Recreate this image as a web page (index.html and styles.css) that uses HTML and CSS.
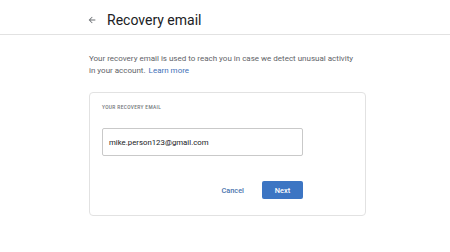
FILE: index.html
```html
<!DOCTYPE html>
<html lang="en">
<head>
<meta charset="utf-8">
<title>Recovery email</title>
<link rel="stylesheet" href="styles.css">
</head>
<body>
<header class="header">
  <svg class="back" viewBox="0 0 24 24" width="10" height="10" aria-hidden="true"><path d="M20 11H7.83l5.59-5.59L12 4l-8 8 8 8 1.41-1.41L7.83 13H20v-2z"/></svg>
  <h1 class="title">Recovery email</h1>
</header>
<main class="main">
  <p class="intro">Your recovery email is used to reach you in case we detect unusual activity in your account.<a class="link" href="#">Learn more</a></p>
  <section class="card">
    <div class="label">YOUR RECOVERY EMAIL</div>
    <div class="field">mike.person123@gmail.com</div>
    <div class="actions">
      <button class="btn-text" type="button">Cancel</button>
      <button class="btn-primary" type="button">Next</button>
    </div>
  </section>
</main>
</body>
</html>
```
FILE: styles.css
```css
html, body {
  margin: 0;
  padding: 0;
  background: #ffffff;
  font-family: Roboto, "Liberation Sans", Arial, sans-serif;
  color: #202124;
}
.header {
  height: 35px;
  border-bottom: 1px solid #e2e2e2;
  display: flex;
  align-items: center;
  padding-left: 87px;
  padding-top: 6px;
  box-sizing: border-box;
}
.back {
  fill: #6b6f73;
  margin-right: 10px;
}
.title {
  margin: 0;
  font-size: 14px;
  font-weight: 400;
  color: #202124;
  line-height: 18px;
}
.main {
  padding-left: 89px;
  width: 277px;
}
.intro {
  margin: 18px 0 0;
  font-size: 8px;
  line-height: 12px;
  color: #5f6368;
  width: 268px;
}
.link {
  color: #3f70b7;
  text-decoration: none;
  margin-left: 3px;
}
.card {
  margin-top: 15px;
  border: 1px solid #e2e2e2;
  border-radius: 4px;
  padding: 12px 12px 17px;
  height: 124px;
  box-sizing: border-box;
}
.label {
  font-size: 4.8px;
  line-height: 6px;
  letter-spacing: 0.35px;
  color: #6f7377;
  font-weight: 500;
}
.field {
  margin-top: 17px;
  width: 201px;
  height: 28px;
  box-sizing: border-box;
  border: 1px solid #c9c9c9;
  border-radius: 2px;
  padding-left: 6px;
  display: flex;
  align-items: center;
  font-size: 7.8px;
  color: #202124;
}
.actions {
  margin-top: 25px;
  width: 201px;
  display: flex;
  justify-content: flex-end;
  align-items: center;
  gap: 18px;
}
.btn-text {
  border: 0;
  background: none;
  padding: 0;
  font-family: inherit;
  font-size: 7.4px;
  font-weight: 500;
  color: #4a73ad;
}
.btn-primary {
  border: 0;
  border-radius: 2px;
  background: #3c75c3;
  color: #ffffff;
  width: 41px;
  height: 18px;
  padding: 0;
  font-family: inherit;
  font-size: 7.4px;
  font-weight: 500;
}
```
